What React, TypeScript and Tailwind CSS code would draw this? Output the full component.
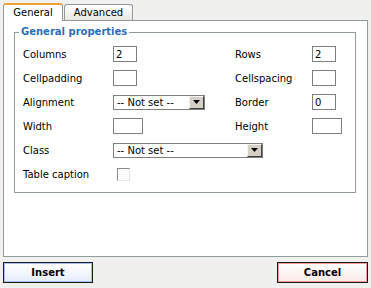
import React from "react";

function TextBox({ w, value = "" }: { w: string; value?: string }) {
  return (
    <input
      readOnly
      value={value}
      className={`${w} h-[16px] border border-[#7f7f7f] bg-white px-[2px] text-[10px] leading-[14px] text-black outline-none`}
    />
  );
}

function Select({ w }: { w: string }) {
  return (
    <div className={`${w} h-[15px] border border-[#7f7f7f] bg-white flex items-center justify-between`}>
      <span className="pl-[3px] leading-[13px]">-- Not set --</span>
      <div className="h-[13px] w-[15px] bg-[#d4d0c8] border-t border-l border-t-[#f4f3ee] border-l-[#f4f3ee] border-r border-b border-r-[#404040] border-b-[#404040] flex items-center justify-center">
        <svg width="7" height="4" viewBox="0 0 7 4">
          <path d="M0 0h7L3.5 4z" fill="#000" />
        </svg>
      </div>
    </div>
  );
}

export default function App() {
  return (
    <div className="w-[371px] h-[288px] bg-[#f0f0ee] font-['DejaVu_Sans',Verdana,sans-serif] text-[10px] text-black flex flex-col">
      {/* tabs */}
      <div className="flex items-end h-[20px] pl-[3px] gap-[1px]">
        <div className="relative z-10 -mb-px h-[18px] w-[60px] bg-white border-x border-[#919b9c] border-t-2 border-t-[#f0a030] rounded-t-[3px] flex items-center justify-center leading-[14px]">
          General
        </div>
        <div className="h-[16px] w-[69px] bg-gradient-to-b from-white to-[#e8e7e1] border border-b-0 border-[#919b9c] rounded-t-[3px] flex items-center justify-center leading-[14px]">
          Advanced
        </div>
      </div>

      {/* panel */}
      <div className="ml-[3px] w-[365px] h-[237px] border border-[#919b9c] bg-white">
        <fieldset className="ml-[10px] mt-[5px] w-[342px] border border-[#919b9c] p-0 m-0">
          <legend className="ml-[4px] px-[2px] font-bold text-[#2b6fb6] leading-[12px]">
            General properties
          </legend>
          <div className="grid grid-cols-[90px_122px_77px_1fr] auto-rows-[24px] items-center pl-[8px] pt-[4px] pb-[6px]">
            <span>Columns</span>
            <TextBox w="w-[24px]" value="2" />
            <span>Rows</span>
            <TextBox w="w-[24px]" value="2" />

            <span>Cellpadding</span>
            <TextBox w="w-[24px]" />
            <span>Cellspacing</span>
            <TextBox w="w-[24px]" />

            <span>Alignment</span>
            <Select w="w-[92px]" />
            <span>Border</span>
            <TextBox w="w-[24px]" value="0" />

            <span>Width</span>
            <TextBox w="w-[30px]" />
            <span>Height</span>
            <TextBox w="w-[30px]" />

            <span>Class</span>
            <div className="col-span-3">
              <Select w="w-[150px]" />
            </div>

            <span>Table caption</span>
            <div className="col-span-3">
              <div className="ml-[4px] w-[13px] h-[13px] bg-[#fbfbfb] border-t border-l border-t-[#8a8a8a] border-l-[#8a8a8a] border-r border-b border-r-[#e6e6e6] border-b-[#e6e6e6]" />
            </div>
          </div>
        </fieldset>
      </div>

      {/* buttons */}
      <div className="mt-[5px] flex justify-between px-[3px]">
        <button className="w-[90px] h-[21px] border border-[#1a1a1a] p-0">
          <div className="h-full w-full border border-[#a8c0f4] bg-gradient-to-b from-white to-[#e6edfb] flex items-center justify-center font-bold leading-[12px]">
            Insert
          </div>
        </button>
        <button className="w-[91px] h-[21px] border border-[#1a1a1a] p-0">
          <div className="h-full w-full border border-[#f09a9a] bg-gradient-to-b from-white to-[#fbe9e9] flex items-center justify-center font-bold leading-[12px]">
            Cancel
          </div>
        </button>
      </div>
    </div>
  );
}
